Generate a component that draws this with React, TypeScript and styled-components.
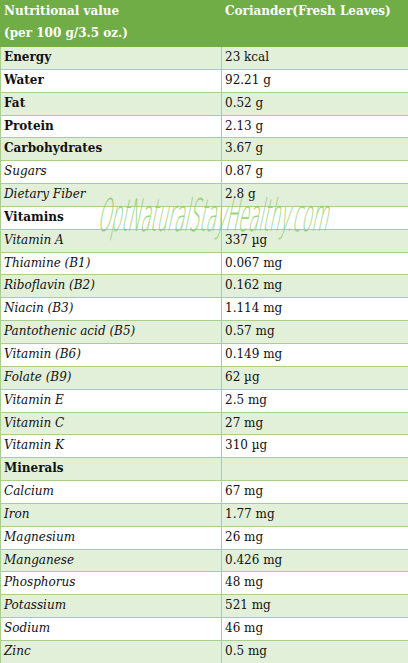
import React from 'react';
import styled, { createGlobalStyle } from 'styled-components';

type Kind = 'head' | 'sub';

interface Row {
  label: string;
  value: string;
  kind: Kind;
}

const rows: Row[] = [
  { label: 'Energy', value: '23 kcal', kind: 'head' },
  { label: 'Water', value: '92.21 g', kind: 'head' },
  { label: 'Fat', value: '0.52 g', kind: 'head' },
  { label: 'Protein', value: '2.13 g', kind: 'head' },
  { label: 'Carbohydrates', value: '3.67 g', kind: 'head' },
  { label: 'Sugars', value: '0.87 g', kind: 'sub' },
  { label: 'Dietary Fiber', value: '2.8 g', kind: 'sub' },
  { label: 'Vitamins', value: '', kind: 'head' },
  { label: 'Vitamin A', value: '337 µg', kind: 'sub' },
  { label: 'Thiamine (B1)', value: '0.067 mg', kind: 'sub' },
  { label: 'Riboflavin (B2)', value: '0.162 mg', kind: 'sub' },
  { label: 'Niacin (B3)', value: '1.114 mg', kind: 'sub' },
  { label: 'Pantothenic acid (B5)', value: '0.57 mg', kind: 'sub' },
  { label: 'Vitamin (B6)', value: '0.149 mg', kind: 'sub' },
  { label: 'Folate (B9)', value: '62 µg', kind: 'sub' },
  { label: 'Vitamin E', value: '2.5 mg', kind: 'sub' },
  { label: 'Vitamin C', value: '27 mg', kind: 'sub' },
  { label: 'Vitamin K', value: '310 µg', kind: 'sub' },
  { label: 'Minerals', value: '', kind: 'head' },
  { label: 'Calcium', value: '67 mg', kind: 'sub' },
  { label: 'Iron', value: '1.77 mg', kind: 'sub' },
  { label: 'Magnesium', value: '26 mg', kind: 'sub' },
  { label: 'Manganese', value: '0.426 mg', kind: 'sub' },
  { label: 'Phosphorus', value: '48 mg', kind: 'sub' },
  { label: 'Potassium', value: '521 mg', kind: 'sub' },
  { label: 'Sodium', value: '46 mg', kind: 'sub' },
  { label: 'Zinc', value: '0.5 mg', kind: 'sub' },
];

const GlobalStyle = createGlobalStyle`
  html, body {
    margin: 0;
    padding: 0;
    background: #ffffff;
  }
  body {
    font-family: "DejaVu Serif", "Liberation Serif", serif;
    color: #111;
  }
`;

const Table = styled.div`
  position: relative;
  width: 408px;
  overflow: hidden;
`;

const Header = styled.div`
  display: grid;
  grid-template-columns: 221px 1fr;
  height: 47px;
  background: #70ad47;
  color: #fff;
  font-weight: bold;
  font-size: 12px;
`;

const HeadCell = styled.div`
  padding: 0 4px;
  line-height: 22px;
`;

const BodyRow = styled.div<{ $shade: boolean }>`
  display: grid;
  grid-template-columns: 221px 1fr;
  height: 22.85px;
  box-sizing: border-box;
  border-bottom: 1px solid #a8d08d;
  border-left: 1px solid #a8d08d;
  background: ${({ $shade }) => ($shade ? '#e2efd9' : '#ffffff')};
`;

const LabelCell = styled.div<{ $kind: Kind }>`
  padding: 0 3px;
  font-size: 12px;
  line-height: 20px;
  font-weight: ${({ $kind }) => ($kind === 'head' ? 'bold' : 'normal')};
  font-style: ${({ $kind }) => ($kind === 'sub' ? 'italic' : 'normal')};
  border-right: 1px solid #a8d08d;
  white-space: nowrap;
`;

const ValueCell = styled.div`
  padding: 0 3px;
  font-size: 12px;
  line-height: 20px;
  white-space: nowrap;
`;

const Watermark = styled.div`
  position: absolute;
  left: 106px;
  top: 189px;
  font-family: "DejaVu Sans", sans-serif;
  font-size: 45px;
  font-weight: 300;
  color: #8ccd66;
  opacity: 0.85;
  white-space: nowrap;
  transform-origin: left top;
  transform: skewX(-12deg) scaleX(0.367);
  pointer-events: none;
`;

export default function App() {
  return (
    <>
      <GlobalStyle />
      <Table>
        <Header>
          <HeadCell>
            Nutritional value
            <br />
            (per 100 g/3.5 oz.)
          </HeadCell>
          <HeadCell>Coriander(Fresh Leaves)</HeadCell>
        </Header>
        {rows.map((r, i) => (
          <BodyRow key={r.label} $shade={i % 2 === 0}>
            <LabelCell $kind={r.kind}>{r.label}</LabelCell>
            <ValueCell>{r.value}</ValueCell>
          </BodyRow>
        ))}
        <Watermark>OptNaturalStayHealthy.com</Watermark>
      </Table>
    </>
  );
}
